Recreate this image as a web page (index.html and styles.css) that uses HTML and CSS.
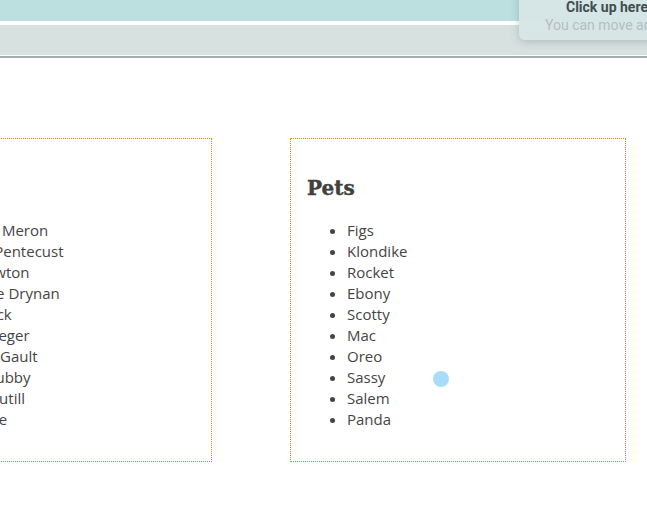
FILE: index.html
```html
<!DOCTYPE html>
<html>
<head>
<meta charset="utf-8">
<link rel="stylesheet" href="styles.css">
</head>
<body>
<header class="topbar">
  <div class="band-teal"></div>
  <div class="band-grey"></div>
</header>
<div class="tip">
  <div class="tip-title">Click up here</div>
  <div class="tip-sub">You can move and resize</div>
</div>
<main class="boxes">
  <section class="box box-left">
    <h2 class="box-title">People</h2>
    <ul class="list">
      <li>Charlotte Meron</li>
      <li>Beatrice Pentecust</li>
      <li>Rosie Newton</li>
      <li>Jacqueline Drynan</li>
      <li>Hattie Peck</li>
      <li>Agnes Krieger</li>
      <li>Maureen Gault</li>
      <li>Amelia Dubby</li>
      <li>Edward Cutill</li>
      <li>Eva Moore</li>
    </ul>
  </section>
  <section class="box box-right">
    <h2 class="box-title">Pets</h2>
    <ul class="list">
      <li>Figs</li>
      <li>Klondike</li>
      <li>Rocket</li>
      <li>Ebony</li>
      <li>Scotty</li>
      <li>Mac</li>
      <li>Oreo</li>
      <li>Sassy</li>
      <li>Salem</li>
      <li>Panda</li>
    </ul>
  </section>
</main>
<div class="cursor-dot"></div>
</body>
</html>
```
FILE: styles.css
```css
html, body {
  margin: 0;
  padding: 0;
  background: #ffffff;
  overflow: hidden;
  width: 647px;
  height: 529px;
}
body {
  font-family: "Open Sans", "Noto Sans", sans-serif;
  color: #454545;
  position: relative;
}
.topbar {
  height: 56px;
  border-bottom: 2px solid #a3acab;
  background: #ffffff;
}
.band-teal {
  height: 21px;
  background: #bcdfdf;
}
.band-grey {
  height: 30px;
  margin-top: 4px;
  background: #d7e1e0;
}
.tip {
  position: absolute;
  left: 519px;
  top: -10px;
  width: 200px;
  height: 50px;
  box-sizing: border-box;
  padding: 9px 0 0 26px;
  background: rgba(214, 229, 229, 0.96);
  border-radius: 6px;
  box-shadow: 0 2px 8px rgba(60, 80, 80, 0.25);
  font-family: "Roboto", "Liberation Sans", sans-serif;
  font-size: 14px;
  line-height: 17px;
}
.tip-title {
  font-weight: 700;
  color: #3e4f4f;
  padding-left: 21px;
}
.tip-sub {
  color: #b3bfbf;
  margin-top: 1px;
}
.boxes {
  display: flex;
  gap: 78px;
  margin: 80px 0 0 -124px;
}
.box {
  width: 336px;
  height: 324px;
  box-sizing: border-box;
  border: 1px dotted #c8900f;
  padding: 36px 16px 0 16px;
}
.box-title {
  margin: 0 0 19px 0;
  font-family: "DejaVu Serif", serif;
  font-weight: 700;
  font-size: 20px;
  line-height: 26px;
  color: #404040;
  -webkit-text-stroke: 0.4px #404040;
}
.list {
  margin: 0;
  padding-left: 40px;
  font-size: 15px;
  line-height: 21px;
}
.cursor-dot {
  position: absolute;
  left: 433px;
  top: 371px;
  width: 16px;
  height: 16px;
  border-radius: 50%;
  background: #a9dcf8;
}
```
